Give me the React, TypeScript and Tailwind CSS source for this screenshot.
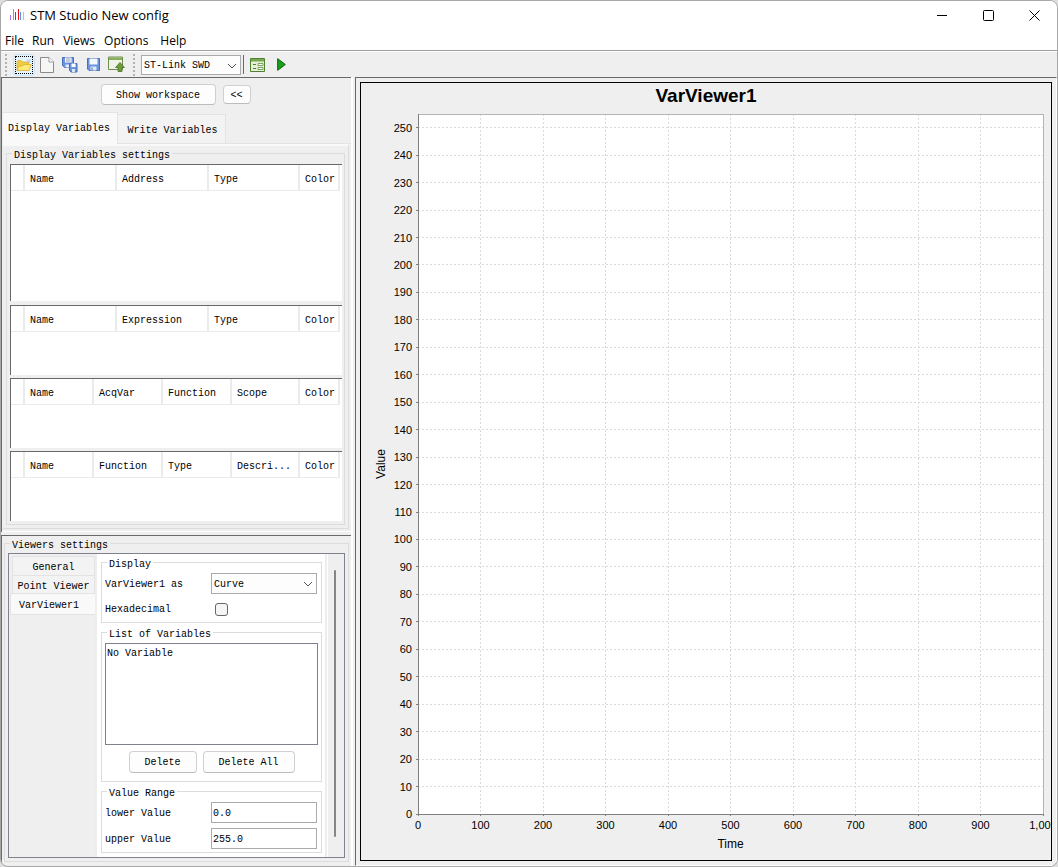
import React, { useState } from "react";

const mono = "font-['Liberation_Mono',monospace] text-[10px] leading-3 text-black";

function Group({ title, className = "", children }: { title: string; className?: string; children: React.ReactNode }) {
  return (
    <fieldset className={`min-w-0 border border-[#dcdcdc] ${className}`}>
      <legend className="ml-0.5 px-0.5 pt-1.5 leading-[8px]">{title}</legend>
      {children}
    </fieldset>
  );
}

function VarTable({ label, columns, className }: { label: string; columns: string[]; className: string }) {
  const fourColumns = columns.length === 4;
  const widths = fourColumns
    ? ["w-[92px]", "w-[92px]", "w-[91px]", "w-10"]
    : ["w-[69px]", "w-[69px]", "w-[69px]", "w-[68px]", "w-10"];
  return (
    <div className={`border-t border-l border-[#696969] bg-white ${className}`}>
      <table aria-label={label} className="w-[329px] table-fixed border-separate border-spacing-0">
        <thead>
          <tr className="h-[26px]">
            <th className="w-[14px] border-r-2 border-b border-[#ebebeb]" />
            {columns.map((c, i) => (
              <th
                key={c}
                className={`border-r-2 border-b border-[#ebebeb] pt-1 pl-[5px] text-left font-normal whitespace-nowrap ${widths[i]}`}
              >
                {c}
              </th>
            ))}
          </tr>
        </thead>
      </table>
    </div>
  );
}

function Combo({ label, id, options, className = "" }: { label?: string; id: string; options: string[]; className?: string }) {
  return (
    <div className={`relative ${className}`}>
      <select
        id={id}
        aria-label={label}
        className="h-full w-full appearance-none border border-[#a9abae] bg-[#fdfdfd] pt-0.5 pl-[2px] outline-none"
      >
        {options.map((o) => (
          <option key={o}>{o}</option>
        ))}
      </select>
      <svg className="pointer-events-none absolute top-[8px] right-1 h-[6px] w-[10px]" viewBox="0 0 10 6" fill="none" stroke="#555" strokeWidth="1">
        <path d="M1 1l4 4 4-4" />
      </svg>
    </div>
  );
}

const pushButton = "rounded border border-[#d0d0d0] border-b-[#bcbcbc] bg-[#fdfdfd] pt-0.5";

function Grip() {
  return (
    <svg className="h-[22px] w-[3px]" viewBox="0 0 3 22" fill="#b4b4b4">
      {[0, 4, 8, 12, 16, 20].map((y) => (
        <rect key={y} x="0" y={y} width="2" height="2" />
      ))}
    </svg>
  );
}

function Logo() {
  return (
    <svg className="h-[14px] w-[15px]" viewBox="0 0 15 14">
      <rect x="0" y="7" width="1" height="5" fill="#b06cf0" />
      <rect x="3" y="1" width="1" height="11" fill="#e0806c" />
      <rect x="5" y="4" width="1" height="8" fill="#30687c" />
      <rect x="8" y="1" width="1" height="11" fill="#e01020" />
      <rect x="10" y="4" width="1" height="8" fill="#5c94dc" />
      <rect x="13" y="4" width="1" height="8" fill="#c4b0f4" />
    </svg>
  );
}

function FolderIcon() {
  return (
    <svg width="16" height="14" viewBox="0 0 16 14">
      <path d="M10.500 1.500h4l.5 3-3 1z" fill="#bcd8f4" />
      <path d="M1 12V3.500l1-1h3l1.500 1.500H12l.5 1V12z" fill="#f2cc40" stroke="#dcae2c" strokeWidth=".8" />
      <path d="M1 12.500L3 8h3l2-1.500h7.300L13 12.500z" fill="#ffe978" stroke="#dcb030" strokeWidth=".8" />
    </svg>
  );
}

function PageIcon() {
  return (
    <svg width="14" height="16" viewBox="0 0 14 16">
      <path d="M.5.5h8.500l4.500 4.500v10.500H.5z" fill="#f6f6f6" stroke="#8a8a8a" />
      <path d="M9 .5V5h4.500" fill="#fff" stroke="#9a9a9a" />
    </svg>
  );
}

function SaveAllIcon() {
  return (
    <svg width="16" height="16" viewBox="0 0 16 16">
      <path d="M.5.5h11v10H2.500l-2-2z" fill="#6c94dc" stroke="#4870b8" />
      <path d="M3 .5h6.500v5H3z" fill="#fff" />
      <path d="M4 2h4.500M4 4h4.500" stroke="#8498b8" />
      <path d="M3.500 7.500h4v3h-4z" fill="#e4ecf8" />
      <path d="M7.500 6.500h7.500v8.500H9l-1.500-1.500z" fill="#6c94dc" stroke="#4870b8" />
      <path d="M9.500 6.500h4v3.500h-4z" fill="#fff" />
      <path d="M10 12h3v3h-3z" fill="#dce8f8" />
    </svg>
  );
}

function SaveIcon() {
  return (
    <svg width="13" height="13" viewBox="0 0 13 13">
      <path d="M.5.5h12v12H2L.5 11z" fill="#6c94dc" stroke="#4870b8" />
      <path d="M2.500.500h8v6h-8z" fill="#f4f8ff" />
      <path d="M3.500 8.500h6v4h-6z" fill="#e0e8f4" />
      <path d="M5 9.500v3" stroke="#4870b8" />
    </svg>
  );
}

function ExportIcon() {
  return (
    <svg width="17" height="17" viewBox="0 0 17 17">
      <path d="M.5 1h14v12.500H.5z" fill="#eef2e8" stroke="#708c50" />
      <path d="M1 1.500h13V4H1z" fill="#88b058" />
      <path d="M12 6.500l4.500 5h-2.500v4h-4v-4H7.500z" fill="#6c9c3c" stroke="#4c7428" strokeWidth=".8" />
    </svg>
  );
}

function FormIcon() {
  return (
    <svg width="15" height="14" viewBox="0 0 15 14">
      <path d="M.5.5h14v13H.5z" fill="#e6eed8" stroke="#4f8030" />
      <path d="M1 1h13v2.500H1z" fill="#78a850" />
      <path d="M3 6.500h3M3 10.500h3" stroke="#4f8030" />
      <path d="M8 5.500h5v2H8zM8 9.500h5v2H8z" fill="#fff" stroke="#5f9040" strokeWidth=".8" />
    </svg>
  );
}

function PlayIcon() {
  return (
    <svg width="9" height="13" viewBox="0 0 9 13">
      <path d="M.7.7L8.300 6.500.7 12.300z" fill="#18a018" stroke="#066006" />
    </svg>
  );
}

function Chart() {
  const yTicks = Array.from({ length: 26 }, (_, i) => i * 10);
  const xTicks = Array.from({ length: 11 }, (_, i) => i * 100);
  const yPos = (v: number) => `${100 - (v / 255) * 100}%`;
  const xPos = (v: number) => `${v / 10}%`;
  return (
    <div className="flex flex-1 flex-col overflow-hidden border border-black bg-[#efefef] pb-[46px] font-['Liberation_Sans',sans-serif]">
      <h1 className="h-[31px] pt-px text-center text-[19px] leading-6 font-bold text-black">VarViewer1</h1>
      <div className="mr-2 ml-[57px] flex flex-1 bg-white">
        <svg className="h-auto w-full flex-1 overflow-visible" role="img" aria-label="VarViewer1 curve">
          <g stroke="#dadada" strokeDasharray="2 2" shapeRendering="crispEdges">
            {yTicks.slice(1).map((v) => (
              <line key={v} x1="0" x2="100%" y1={yPos(v)} y2={yPos(v)} />
            ))}
            {xTicks.slice(1, 10).map((v) => (
              <line key={v} x1={xPos(v)} x2={xPos(v)} y1="0" y2="100%" />
            ))}
          </g>
          <g stroke="#b4b4b4" shapeRendering="crispEdges">
            <line x1="0" x2="100%" y1="0" y2="0" />
            <line x1="100%" x2="100%" y1="0" y2="100%" />
          </g>
          <g stroke="#808080" shapeRendering="crispEdges">
            <line x1="0" x2="0" y1="0" y2="100%" />
            <line x1="0" x2="100%" y1="100%" y2="100%" />
            {yTicks.map((v) => (
              <line key={v} x1="-2" x2="0" y1={yPos(v)} y2={yPos(v)} />
            ))}
            <svg y="100%" overflow="visible">
              {xTicks.map((v) => (
                <line key={v} x1={xPos(v)} x2={xPos(v)} y1="0" y2="2" />
              ))}
            </svg>
          </g>
          <g fontSize="11" fill="#000">
            {yTicks.map((v) => (
              <text key={v} x="-6" y={yPos(v)} dy="4" textAnchor="end">
                {v}
              </text>
            ))}
            {xTicks.map((v) => (
              <text key={v} x={xPos(v)} y="100%" dy="15" textAnchor="middle">
                {v.toLocaleString("en-US")}
              </text>
            ))}
          </g>
          <g fontSize="12" fill="#000" textAnchor="middle">
            <text x="50%" y="100%" dy="34">
              Time
            </text>
            <svg y="50%" overflow="visible">
              <text transform="translate(-33 0) rotate(-90)">Value</text>
            </svg>
          </g>
        </svg>
      </div>
    </div>
  );
}

const field = "h-[21px] w-[106px] border border-[#a9abae] bg-white pt-0.5 pl-px outline-none";

export default function App() {
  const [lower, setLower] = useState("0.0");
  const [upper, setUpper] = useState("255.0");
  return (
    <div className="flex min-h-screen bg-[#dedede]">
      <div className="flex min-w-0 flex-1 flex-col overflow-hidden rounded-lg border border-[#a8a8a8] bg-[#efefef]">
        <header className="bg-white font-['Open_Sans','Noto_Sans',sans-serif] text-black">
          <div className="flex h-7 items-center pl-[9px]">
            <Logo />
            <span className="ml-[5px] text-[13px] leading-4">STM Studio New config</span>
            <div className="ml-auto flex">
              <button aria-label="Minimize" className="flex h-7 w-[46px] items-center justify-center">
                <svg width="11" height="11" viewBox="0 0 11 11" stroke="#000"><path d="M0 5.500h10" /></svg>
              </button>
              <button aria-label="Maximize" className="flex h-7 w-[46px] items-center justify-center">
                <svg width="11" height="11" viewBox="0 0 11 11" stroke="#000" fill="none"><rect x=".5" y=".5" width="10" height="10" rx="1" /></svg>
              </button>
              <button aria-label="Close" className="flex h-7 w-[46px] items-center justify-center">
                <svg width="11" height="11" viewBox="0 0 11 11" stroke="#000"><path d="M.5.5l10 10M10.500.500l-10 10" /></svg>
              </button>
            </div>
          </div>
          <nav className="flex h-[22px] items-center gap-2 border-b border-[#a0a0a0] pt-0.5 pl-1 text-[12px] leading-4">
            <button>File</button>
            <button>Run</button>
            <button className="mx-px">Views</button>
            <button className="mr-1">Options</button>
            <button>Help</button>
          </nav>
        </header>

        <div className={`flex h-[26px] items-center border-t border-white pl-1 ${mono}`}>
          <Grip />
          <button aria-label="Open" className="ml-[5px] flex h-[22px] w-[22px] items-center justify-center rounded-sm border border-[#cce4f7] bg-[#e5f3ff]">
            <span className="flex h-[18px] w-[18px] items-center justify-center border border-dotted border-black">
              <FolderIcon />
            </span>
          </button>
          <button aria-label="New" className="ml-[5px]"><PageIcon /></button>
          <button aria-label="Save all" className="ml-2"><SaveAllIcon /></button>
          <button aria-label="Save" className="ml-[9px]"><SaveIcon /></button>
          <button aria-label="Export" className="ml-2"><ExportIcon /></button>
          <span className="ml-2"><Grip /></span>
          <Combo id="link" label="Connection" options={["ST-Link SWD"]} className="ml-[5px] h-5 w-[100px]" />
          <span className="ml-0.5 h-[19px] w-px bg-[#696969]" />
          <button aria-label="Variable table" className="ml-1.5"><FormIcon /></button>
          <button aria-label="Run acquisition" className="ml-3"><PlayIcon /></button>
        </div>

        <main className={`flex flex-1 ${mono}`}>
          <div className="flex w-[352px] shrink-0 flex-col border-r-2 border-white">
            <section className="border-t border-l border-[#696969]">
              <div className="flex items-center justify-center gap-[7px] pt-1.5 pr-0.5 pb-[7px]">
                <button className={`h-[21px] w-[115px] ${pushButton}`}>Show workspace</button>
                <button className={`h-[19px] w-7 ${pushButton}`}>&lt;&lt;</button>
              </div>
              <div className="flex items-end pl-px" role="tablist">
                <button role="tab" aria-selected="true" className="h-8 w-[115px] border-t border-r border-[#e3e3e3] bg-[#f9f9f9] pr-0.5">
                  Display Variables
                </button>
                <button role="tab" aria-selected="false" className="h-[30px] w-[108px] border-t border-r border-b border-[#e3e3e3] bg-[#f3f3f3] pt-1 pl-0.5">
                  Write Variables
                </button>
                <span className="flex-1 border-b border-[#e3e3e3]" />
              </div>
              <div className="mr-0.5 ml-px border-t-2 border-r border-b border-t-[#f9f9f9] border-r-[#dcdcdc] border-b-[#dcdcdc] px-[3px] pb-[3px]">
                <Group title="Display Variables settings" className="pt-1 pr-0.5 pb-[3px] pl-[3px]">
                  <div className="flex flex-col">
                    <VarTable label="Acquired variables" className="mb-1 h-[137px]" columns={["Name", "Address", "Type", "Color"]} />
                    <VarTable label="Expressions" className="mb-[3px] h-[70px]" columns={["Name", "Expression", "Type", "Color"]} />
                    <VarTable label="Statistics" className="mb-[3px] h-[70px]" columns={["Name", "AcqVar", "Function", "Scope", "Color"]} />
                    <VarTable label="Functions" className="h-[70px]" columns={["Name", "Function", "Type", "Descri...", "Color"]} />
                  </div>
                </Group>
              </div>
              <div className="mt-0.5 h-px bg-white" />
            </section>

            <section className="mt-[3px] flex flex-1 flex-col border-t border-l border-[#696969] pr-0.5 pb-1 pl-0.5">
              <Group title="Viewers settings" className="flex-1 px-[3px] pt-[3px] pb-[3px]">
                <div className="flex h-full border border-[#7d828c]">
                  <div role="tablist" className="flex w-[86px] flex-col pt-0.5 pl-px">
                    <button role="tab" aria-selected="false" className="ml-0.5 h-[19px] border border-b-0 border-[#e3e3e3] bg-[#f3f3f3] pt-1">
                      General
                    </button>
                    <button role="tab" aria-selected="false" className="ml-0.5 h-[18px] border border-b-0 border-[#e3e3e3] bg-[#f3f3f3] pt-1 whitespace-nowrap">
                      Point Viewer
                    </button>
                    <button role="tab" aria-selected="true" className="h-[22px] border border-r-0 border-[#e3e3e3] bg-[#f9f9f9] pt-1 pr-2">
                      VarViewer1
                    </button>
                  </div>
                  <div className="flex flex-1 flex-col gap-0.5 border-x-2 border-[#ededed] bg-white pt-px pr-[3px] pl-1">
                    <Group title="Display" className="pt-1 pr-1 pb-[3px] pl-[3px]">
                      <div className="flex flex-col gap-[5px]">
                        <div className="flex h-[21px] items-center justify-between">
                          <label htmlFor="display-as" className="pt-0.5">VarViewer1 as</label>
                          <Combo id="display-as" options={["Curve"]} className="h-[21px] w-[106px]" />
                        </div>
                        <div className="flex h-[20px] items-center">
                          <label htmlFor="hex" className="w-[110px] pt-0.5">Hexadecimal</label>
                          <input id="hex" type="checkbox" className="h-[13px] w-[13px] appearance-none rounded-[3px] border border-[#666] bg-[#f5f5f5]" />
                        </div>
                      </div>
                    </Group>
                    <Group title="List of Variables" className="pt-1 pr-[3px] pb-2 pl-[3px]">
                      <ul className="h-[102px] border border-[#7d828c] bg-white px-px pt-1">
                        <li>No Variable</li>
                      </ul>
                      <div className="mt-1.5 flex justify-center gap-1.5">
                        <button className={`h-[22px] w-[68px] ${pushButton}`}>Delete</button>
                        <button className={`h-[22px] w-[92px] ${pushButton}`}>Delete All</button>
                      </div>
                    </Group>
                    <Group title="Value Range" className="pt-1 pr-1 pb-[3px] pl-[3px]">
                      <div className="flex flex-col gap-[5px]">
                        <div className="flex items-center justify-between">
                          <label htmlFor="lower" className="pt-0.5">lower Value</label>
                          <input id="lower" value={lower} onChange={(e) => setLower(e.target.value)} className={field} />
                        </div>
                        <div className="flex items-center justify-between">
                          <label htmlFor="upper" className="pt-0.5">upper Value</label>
                          <input id="upper" value={upper} onChange={(e) => setUpper(e.target.value)} className={field} />
                        </div>
                      </div>
                    </Group>
                  </div>
                  <div className="flex w-[17px] justify-center border-l border-white pt-4 pr-0.5 pb-5">
                    <span className="w-0.5 rounded-full bg-[#858585]" />
                  </div>
                </div>
              </Group>
            </section>
          </div>

          <section className="ml-0.5 flex min-w-0 flex-1 flex-col border border-t-[#696969] border-r-white border-b-white border-l-[#696969] p-1">
            <Chart />
          </section>
        </main>
      </div>
    </div>
  );
}
